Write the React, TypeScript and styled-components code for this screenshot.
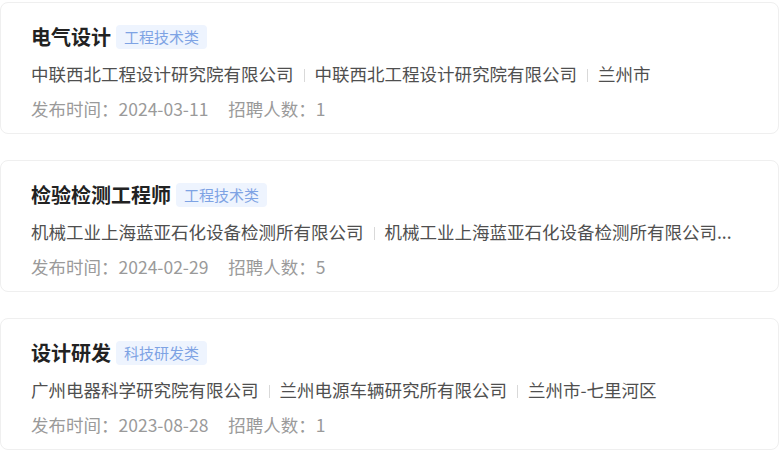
import React from "react";
import styled, { createGlobalStyle } from "styled-components";

const GlobalStyle = createGlobalStyle`
  html, body {
    margin: 0;
    padding: 0;
    background: #ffffff;
  }
  body {
    font-family: "Noto Sans CJK SC", "Noto Sans", sans-serif;
  }
`;

const List = styled.div`
  display: flex;
  flex-direction: column;
  gap: 26px;
  padding-top: 2px;
  width: 779px;
`;

const Card = styled.div`
  box-sizing: border-box;
  height: 132px;
  border: 1px solid #efefef;
  border-radius: 8px;
  background: #fff;
  padding: 19px 30px 11px 30px;
  display: flex;
  flex-direction: column;
`;

const TitleRow = styled.div`
  display: flex;
  align-items: center;
  height: 29px;
`;

const Title = styled.span`
  font-size: 20px;
  font-weight: 700;
  color: #222222;
  line-height: 29px;
`;

const Tag = styled.span`
  margin-left: 5px;
  height: 24px;
  line-height: 24px;
  padding: 0 8px;
  border-radius: 4px;
  background: #eef4fe;
  color: #7ea3e4;
  font-size: 15px;
`;

const CompanyLine = styled.div`
  margin-top: 10px;
  height: 26px;
  line-height: 26px;
  font-size: 17.5px;
  color: #4f4f4f;
  white-space: nowrap;
  overflow: hidden;
`;

const Sep = styled.span`
  display: inline-block;
  width: 1px;
  height: 13px;
  background: #d9d9d9;
  margin: 0 10px;
  vertical-align: -1px;
`;

const Meta = styled.div`
  margin-top: 9px;
  height: 26px;
  line-height: 26px;
  font-size: 17.5px;
  color: #9a9a9a;
  display: flex;
  gap: 20px;
  white-space: nowrap;
`;

type Job = {
  title: string;
  tag: string;
  parts: string[];
  date: string;
  count: number;
};

const jobs: Job[] = [
  {
    title: "电气设计",
    tag: "工程技术类",
    parts: ["中联西北工程设计研究院有限公司", "中联西北工程设计研究院有限公司", "兰州市"],
    date: "2024-03-11",
    count: 1,
  },
  {
    title: "检验检测工程师",
    tag: "工程技术类",
    parts: ["机械工业上海蓝亚石化设备检测所有限公司", "机械工业上海蓝亚石化设备检测所有限公司..."],
    date: "2024-02-29",
    count: 5,
  },
  {
    title: "设计研发",
    tag: "科技研发类",
    parts: ["广州电器科学研究院有限公司", "兰州电源车辆研究所有限公司", "兰州市-七里河区"],
    date: "2023-08-28",
    count: 1,
  },
];

export default function App() {
  return (
    <>
      <GlobalStyle />
      <List>
        {jobs.map((job, i) => (
          <Card key={i}>
            <TitleRow>
              <Title>{job.title}</Title>
              <Tag>{job.tag}</Tag>
            </TitleRow>
            <CompanyLine>
              {job.parts.map((p, j) => (
                <React.Fragment key={j}>
                  {j > 0 && <Sep />}
                  {p}
                </React.Fragment>
              ))}
            </CompanyLine>
            <Meta>
              <span>发布时间：{job.date}</span>
              <span>招聘人数：{job.count}</span>
            </Meta>
          </Card>
        ))}
      </List>
    </>
  );
}
